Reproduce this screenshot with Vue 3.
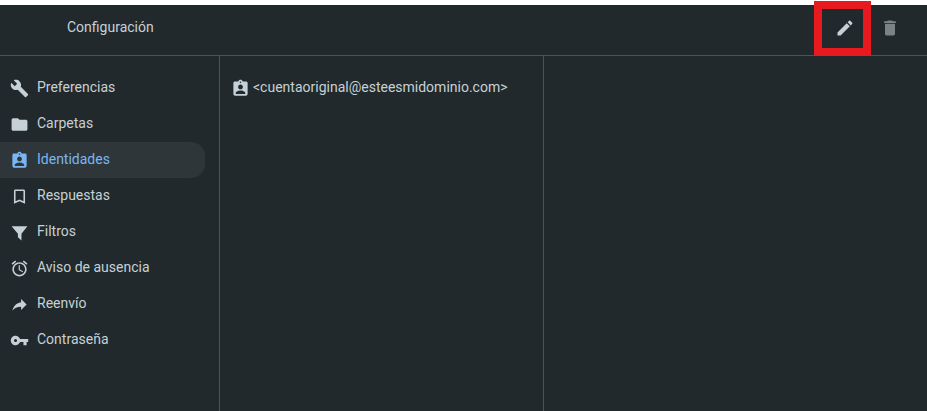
<script setup>
const items = [
  { label: 'Preferencias', d: 'M22.7 19l-9.1-9.1c.9-2.3.4-5-1.5-6.9-2-2-5-2.4-7.4-1.3L9 6 6 9 1.6 4.7C.4 7.1.9 10.1 2.9 12.1c1.9 1.9 4.6 2.4 6.9 1.5l9.1 9.1c.4.4 1 .4 1.4 0l2.3-2.3c.5-.4.5-1.1.1-1.4z' },
  { label: 'Carpetas', d: 'M10 4H4c-1.1 0-1.99.9-1.99 2L2 18c0 1.1.9 2 2 2h16c1.1 0 2-.9 2-2V8c0-1.1-.9-2-2-2h-8l-2-2z' },
  { label: 'Identidades', active: true, d: 'M19 3h-4.18C14.4 1.84 13.3 1 12 1c-1.3 0-2.4.84-2.82 2H5c-1.1 0-2 .9-2 2v14c0 1.1.9 2 2 2h14c1.1 0 2-.9 2-2V5c0-1.1-.9-2-2-2zm-7 0c.55 0 1 .45 1 1s-.45 1-1 1-1-.45-1-1 .45-1 1-1zm0 4c1.66 0 3 1.34 3 3s-1.34 3-3 3-3-1.34-3-3 1.34-3 3-3zm6 12H6v-1.4c0-2 4-3.1 6-3.1s6 1.1 6 3.1V19z' },
  { label: 'Respuestas', d: 'M17 3H7c-1.1 0-1.99.9-1.99 2L5 21l7-3 7 3V5c0-1.1-.9-2-2-2zm0 15l-5-2.18L7 18V5h10v13z' },
  { label: 'Filtros', d: 'M2 4h20l-7.5 9.5V22L10 18v-4.5z' },
  { label: 'Aviso de ausencia', d: 'M22 5.72l-4.6-3.86-1.29 1.53 4.6 3.86L22 5.72zM7.88 3.39L6.6 1.86 2 5.71l1.29 1.53 4.59-3.85zM12.5 8H11v6l4.75 2.85.75-1.23-4-2.37V8zM12 4c-4.97 0-9 4.03-9 9s4.02 9 9 9c4.97 0 9-4.03 9-9s-4.03-9-9-9zm0 16c-3.87 0-7-3.13-7-7s3.13-7 7-7 7 3.13 7 7-3.13 7-7 7z' },
  { label: 'Reenvío', d: 'M14 9V5l7 7-7 7v-4.1c-5 0-8.5 1.6-11 5.1 1-5 4-10 11-11z' },
  { label: 'Contraseña', d: 'M12.65 10C11.83 7.67 9.61 6 7 6c-3.31 0-6 2.69-6 6s2.69 6 6 6c2.61 0 4.83-1.67 5.65-4H17v4h4v-4h2v-4H12.65zM7 14c-1.1 0-2-.9-2-2s.9-2 2-2 2 .9 2 2-.9 2-2 2z' },
]
const identity = items[2].d
const edit = 'M3 17.25V21h3.75L17.81 9.94l-3.75-3.75L3 17.25zM20.71 7.04c.39-.39.39-1.02 0-1.41l-2.34-2.34c-.39-.39-1.02-.39-1.41 0l-1.83 1.83 3.75 3.75 1.83-1.83z'
const trash = 'M6 19c0 1.1.9 2 2 2h8c1.1 0 2-.9 2-2V7H6v12zM19 4h-3.5l-1-1h-5l-1 1H5v2h14V4z'
</script>

<template>
  <div class="page">
    <header class="header">
      <h1 class="title">Configuración</h1>
      <div class="actions">
        <button class="action">
          <svg class="tool-icon" viewBox="0 0 24 24"><path :d="edit" /></svg>
          <span class="highlight"></span>
        </button>
        <button class="action disabled">
          <svg class="tool-icon" viewBox="0 0 24 24"><path :d="trash" /></svg>
        </button>
      </div>
    </header>
    <main class="body">
      <nav class="sidebar">
        <a v-for="item in items" :key="item.label" class="nav-item" :class="{ active: item.active }">
          <svg class="nav-icon" viewBox="0 0 24 24"><path :d="item.d" /></svg>
          <span class="label">{{ item.label }}</span>
        </a>
      </nav>
      <section class="list">
        <div class="identity">
          <svg class="nav-icon" viewBox="0 0 24 24"><path :d="identity" /></svg>
          <span class="label">&lt;cuentaoriginal@esteesmidominio.com&gt;</span>
        </div>
      </section>
      <section class="content"></section>
    </main>
  </div>
</template>

<style>
html, body { margin: 0; background: #fff; }
</style>

<style scoped>
.page {
  box-sizing: border-box;
  width: 927px;
  height: 411px;
  padding-top: 5px;
  font-family: Roboto, sans-serif;
  font-size: 14px;
  color: #c5d1d6;
  overflow: hidden;
  position: relative;
}
.header {
  box-sizing: border-box;
  height: 51px;
  display: flex;
  align-items: center;
  justify-content: space-between;
  padding: 0 19px 4px 67px;
  background: #22292c;
  border-bottom: 1px solid #4b5558;
}
.title { margin: 0 0 2px; font-size: 14px; font-weight: 400; }
.actions { display: flex; gap: 9px; }
.action {
  position: relative;
  width: 36px;
  height: 36px;
  padding: 0;
  border: 0;
  background: none;
  color: #c5d1d6;
  display: flex;
  align-items: center;
  justify-content: center;
}
.action.disabled { color: #7a8487; }
.tool-icon { width: 20px; height: 20px; fill: currentColor; }
.highlight {
  position: absolute;
  left: -13px;
  top: -9px;
  width: 57px;
  height: 55px;
  box-sizing: border-box;
  border: 8px solid #e8191f;
}
.body {
  display: grid;
  grid-template-columns: 220px 324px 1fr;
  height: 355px;
  background: #22292c;
}
.sidebar {
  box-sizing: border-box;
  border-right: 1px solid #4b5558;
  padding: 14px 14px 0 0;
}
.nav-item {
  display: flex;
  align-items: center;
  gap: 8px;
  height: 36px;
  padding-left: 10px;
  border-radius: 0 14px 14px 0;
}
.nav-item.active { background: #2e3639; color: #79b6f2; }
.nav-icon { width: 19px; height: 19px; fill: currentColor; flex: none; }
.label { margin-bottom: 2px; }
.list {
  box-sizing: border-box;
  border-right: 1px solid #4b5558;
  padding: 14px 10px 0 11px;
}
.identity { display: flex; align-items: center; gap: 3px; height: 36px; }
</style>
